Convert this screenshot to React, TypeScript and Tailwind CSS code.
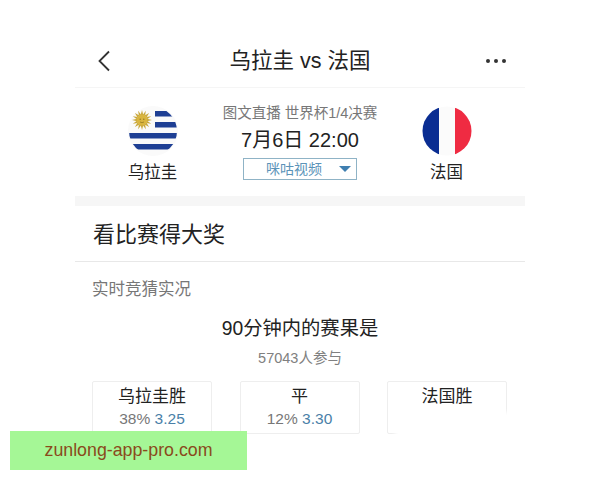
const cjk = "font-['Liberation_Sans','Noto_Sans_CJK_SC',sans-serif]";

function UruguayFlag() {
  const rays = Array.from({ length: 16 }, (_, i) => (i * 360) / 16);
  return (
    <svg width="50" height="50" viewBox="0 0 50 50">
      <defs>
        <clipPath id="uy">
          <circle cx="25" cy="25" r="24" />
        </clipPath>
      </defs>
      <circle cx="25" cy="25" r="25" fill="#fafafa" />
      <g clipPath="url(#uy)">
        <rect x="27" y="5" width="24" height="5.5" fill="#1e3f94" />
        <rect x="27" y="16" width="24" height="5.5" fill="#1e3f94" />
        <rect x="0" y="27" width="50" height="5.5" fill="#1e3f94" />
        <rect x="0" y="38" width="50" height="5.5" fill="#1e3f94" />
      </g>
      <g transform="translate(14 14)">
        {rays.map((a) => (
          <path key={a} d="M-1.3 -5 L0 -10 L1.3 -5 Z" fill="#c9a83c" transform={`rotate(${a})`} />
        ))}
        <circle r="5.4" fill="#d9b53f" />
        <circle cx="-1.8" cy="-0.8" r="0.7" fill="#8f7420" />
        <circle cx="1.8" cy="-0.8" r="0.7" fill="#8f7420" />
        <path d="M-2 2 Q0 3.4 2 2" stroke="#8f7420" strokeWidth="0.7" fill="none" />
      </g>
    </svg>
  );
}

function FranceFlag() {
  return (
    <svg width="50" height="50" viewBox="0 0 50 50">
      <defs>
        <clipPath id="fr">
          <circle cx="25" cy="25" r="24.5" />
        </clipPath>
      </defs>
      <g clipPath="url(#fr)">
        <rect x="0" y="0" width="17" height="50" fill="#0a2d92" />
        <rect x="17" y="0" width="16" height="50" fill="#fbfbfb" />
        <rect x="33" y="0" width="17" height="50" fill="#ef2b42" />
      </g>
    </svg>
  );
}

function OddsCard({ name, pct, odds }: { name: string; pct?: string; odds?: string }) {
  return (
    <div className="w-[120px] h-[53px] border border-[#eeeeee] rounded-[2px] flex flex-col items-center pt-[3px]">
      <div className="text-[17px] leading-[24px] text-[#222222]">{name}</div>
      {pct && (
        <div className="text-[15.5px] leading-[20px] text-[#777777]">
          {pct} <span className="text-[#4a7fa8]">{odds}</span>
        </div>
      )}
    </div>
  );
}

export default function App() {
  return (
    <div className={`relative w-[600px] h-[480px] bg-white overflow-hidden flex justify-center ${cjk}`}>
      <div className="w-[450px] pt-[30px] flex flex-col">
        {/* 顶部导航 */}
        <div className="h-[58px] flex items-center justify-between border-b border-[#f5f5f5] pl-[23px] pr-[19px] pt-[5px]">
          <svg width="12" height="22" viewBox="0 0 12 22" fill="none" stroke="#333333" strokeWidth="1.8">
            <path d="M11 1.5 L1.5 11 L11 20.5" />
          </svg>
          <div className="text-[21.5px] leading-[30px] text-[#222222] -mt-[1px] ml-[4px]">乌拉圭 vs 法国</div>
          <div className="flex gap-[4px] w-[20px]">
            <span className="w-[4px] h-[4px] rounded-full bg-[#333333]" />
            <span className="w-[4px] h-[4px] rounded-full bg-[#333333]" />
            <span className="w-[4px] h-[4px] rounded-full bg-[#333333]" />
          </div>
        </div>

        {/* 比赛信息 */}
        <div className="h-[108px] flex border-b-[10px] border-[#f6f6f6] box-content">
          <div className="w-[154px] flex flex-col items-center pt-[18px] pl-[1px]">
            <UruguayFlag />
            <div className="text-[16.5px] leading-[24px] text-[#222222] mt-[4px]">乌拉圭</div>
          </div>
          <div className="w-[142px] flex flex-col items-center pt-[15px]">
            <div className="text-[14.5px] leading-[20px] text-[#777777] whitespace-nowrap">图文直播 世界杯1/4决赛</div>
            <div className="text-[20px] leading-[26px] text-[#222222] mt-[4px] whitespace-nowrap">7月6日 22:00</div>
            <div className="w-[114px] h-[22px] mt-[5px] border border-[#8fb3c6] flex items-center pl-[22px] gap-[17px]">
              <span className="text-[14px] text-[#5b93b8] whitespace-nowrap">咪咕视频</span>
              <span className="w-0 h-0 border-x-[6px] border-x-transparent border-t-[6px] border-t-[#3f7fb0]" />
            </div>
          </div>
          <div className="flex-1 flex flex-col items-center pt-[18px] pr-[3px]">
            <FranceFlag />
            <div className="text-[16.5px] leading-[24px] text-[#222222] mt-[4px]">法国</div>
          </div>
        </div>

        {/* 竞猜 */}
        <div className="h-[56px] flex items-center border-b border-[#e8e8e8] pl-[18px] pt-[1px] box-border">
          <div className="text-[22px] text-[#222222]">看比赛得大奖</div>
        </div>
        <div className="px-[17px] pt-[16px]">
          <div className="text-[16.5px] leading-[22px] text-[#777777]">实时竞猜实况</div>
          <div className="text-[19.3px] leading-[28px] text-[#222222] text-center mt-[15px]">90分钟内的赛果是</div>
          <div className="text-[14.5px] leading-[20px] text-[#808080] text-center mt-[5px]">57043人参与</div>
          <div className="flex gap-[27.5px] mt-[13px]">
            <OddsCard name="乌拉圭胜" pct="38%" odds="3.25" />
            <OddsCard name="平" pct="12%" odds="3.30" />
            <OddsCard name="法国胜" />
          </div>
        </div>
      </div>

      {/* 右下角被抹掉的部分 */}
      <div className="absolute left-[395px] top-[412px] w-[125px] h-[28px] bg-white blur-[2px]" />

      {/* 水印 */}
      <div className="absolute left-[10px] top-[431px] w-[237px] h-[39px] bg-[#a5f796] flex items-center justify-center text-[17.8px] text-[#8a4a1c]">
        zunlong-app-pro.com
      </div>
    </div>
  );
}
